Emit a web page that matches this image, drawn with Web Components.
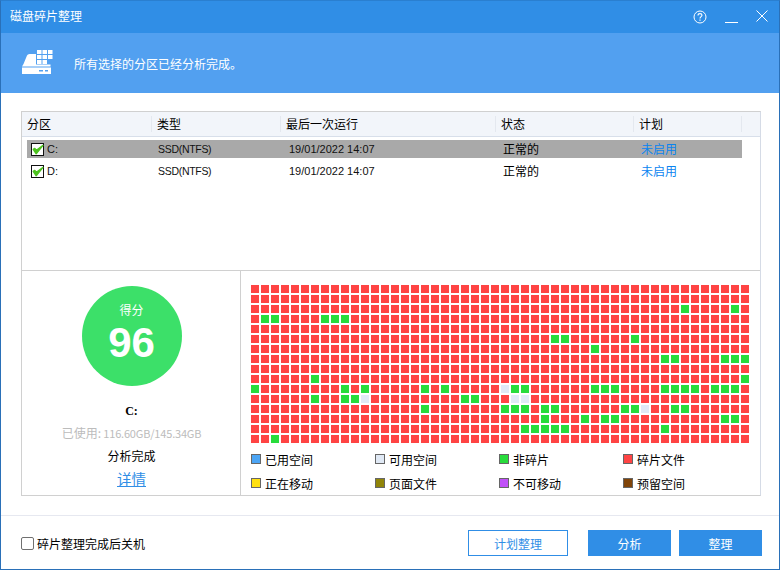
<!DOCTYPE html>
<html lang="zh">
<head>
<meta charset="utf-8">
<title>磁盘碎片整理</title>
<style>
  html, body { margin: 0; padding: 0; background: #fff; }
  body { font: 12px "Noto Sans CJK SC", "Liberation Sans", sans-serif; color: #000; }
</style>
</head>
<body>

<app-window>
  <title-bar slot="top">磁盘碎片整理</title-bar>
  <info-banner slot="top">所有选择的分区已经分析完成。</info-banner>
  <partition-table slot="table">
    <partition-row selected drive="C:" kind="SSD(NTFS)" last="19/01/2022 14:07" state="正常的" plan="未启用"></partition-row>
    <partition-row drive="D:" kind="SSD(NTFS)" last="19/01/2022 14:07" state="正常的" plan="未启用"></partition-row>
  </partition-table>
  <score-panel slot="score" score="96" drive="C:" used="116.60GB/145.34GB"></score-panel>
  <disk-map slot="map"></disk-map>
  <footer-bar slot="footer"></footer-bar>
</app-window>

<script>
const UI_FONT = '"Noto Sans CJK SC", "Liberation Sans", sans-serif';

class AppWindow extends HTMLElement {
  constructor() {
    super();
    this.attachShadow({ mode: 'open' });
    this.shadowRoot.innerHTML = `
      <style>
        :host { display: flex; flex-direction: column; box-sizing: border-box; width: 780px; height: 570px;
                border: 1px solid #2a70b8; border-top-color: #2a7fd0; background: #fff; font: 12px ${UI_FONT}; }
        .panel { flex: none; margin: 18px 18px 0 20px; height: 383px; border: 1px solid #d0d0d0; border-right-color: #d5dbe6;
                 display: grid; grid-template-rows: 158px 225px; }
        .lower { display: grid; grid-template-columns: 219px 1fr; border-top: 1px solid #d0d0d0; }
      </style>
      <slot name="top"></slot>
      <div class="panel">
        <slot name="table"></slot>
        <div class="lower">
          <slot name="score"></slot>
          <slot name="map"></slot>
        </div>
      </div>
      <slot name="footer"></slot>
    `;
  }
}

class TitleBar extends HTMLElement {
  constructor() {
    super();
    this.attachShadow({ mode: 'open' });
    this.shadowRoot.innerHTML = `
      <style>
        :host { display: flex; align-items: center; height: 32px; background: #308ee6; color: #fff; padding-left: 9px; flex: none; }
        .text { flex: 1; position: relative; top: -2px; }
        svg { display: block; fill: none; stroke: #fff; }
        .btns { display: flex; align-items: center; margin-right: 11px; }
        .help { margin-right: 18px; }
        .min { margin-right: 18px; }
        .close { position: relative; top: -1px; }
      </style>
      <span class="text"><slot></slot></span>
      <div class="btns">
        <svg class="help" width="14" height="14" viewBox="0 0 14 14">
          <circle cx="7" cy="7" r="6" stroke-width="1"/>
          <path d="M5 5.500C5 4.200 5.900 3.600 7 3.600S9 4.300 9 5.300C9 6.600 7 6.600 7 8.400" stroke-width="1.100"/>
          <path d="M7 9.600V10.800" stroke-width="1.200"/>
        </svg>
        <svg class="min" width="13" height="14" viewBox="0 0 13 14"><path d="M0 12.500H13" stroke-width="1"/></svg>
        <svg class="close" width="12" height="12" viewBox="0 0 12 12"><path d="M.5 .5L11.500 11.500M11.500 .5L.5 11.500" stroke-width="1"/></svg>
      </div>
    `;
  }
}

class InfoBanner extends HTMLElement {
  constructor() {
    super();
    this.attachShadow({ mode: 'open' });
    this.shadowRoot.innerHTML = `
      <style>
        :host { display: flex; align-items: center; height: 60px; background: #52a0f0; color: #fff; padding-left: 21px; flex: none; }
        svg { display: block; fill: #fff; margin-right: 20px; }
      </style>
      <svg width="32" height="26" viewBox="0 0 32 26">
        <path d="M0 16.500L1.500 14L5 5.500Q5.600 4 7.500 4H14V14.500H28.500V16.500Z"/>
        <path d="M0 17.500H29V24H0ZM17 20V21.500H21V20ZM23 20V21.500H26V20Z" fill-rule="evenodd"/>
        <rect x="15" y="0" width="4.500" height="4"/><rect x="20.500" y="0" width="4.500" height="4"/><rect x="26" y="0" width="4.500" height="4"/>
        <rect x="15" y="5" width="4.500" height="4"/><rect x="20.500" y="5" width="4.500" height="4"/><rect x="26" y="5" width="4.500" height="4"/>
        <rect x="15" y="10" width="4.500" height="4"/><rect x="20.500" y="10" width="4.500" height="4"/>
      </svg>
      <slot></slot>
    `;
  }
}

class PartitionTable extends HTMLElement {
  constructor() {
    super();
    this.attachShadow({ mode: 'open' });
    this.shadowRoot.innerHTML = `
      <style>
        :host { display: block; overflow: hidden; }
        .head { display: grid; grid-template-columns: 130px 129px 215px 138px 108px 1fr; height: 24px;
                background: #f2f5fa; border-bottom: 1px solid #d8dfea; align-items: center; }
        .head span { box-sizing: border-box; height: 16px; line-height: 15px; padding-left: 5px; border-right: 1px solid #e4e8ef; }
        .head span:last-child { border-right: 0; }
        .rows { display: flex; flex-direction: column; gap: 4px; padding: 3px 18px 0 5px; }
      </style>
      <div class="head">
        <span>分区</span><span>类型</span><span>最后一次运行</span><span>状态</span><span>计划</span><span></span>
      </div>
      <div class="rows"><slot></slot></div>
    `;
  }
}

class PartitionRow extends HTMLElement {
  connectedCallback() {
    if (this.shadowRoot) return;
    this.attachShadow({ mode: 'open' });
    const g = n => this.getAttribute(n);
    this.shadowRoot.innerHTML = `
      <style>
        :host { display: grid; grid-template-columns: 131px 131px 214px 138px 1fr; height: 18px; align-items: center;
                font-size: 11px; line-height: 18px; }
        :host([selected]) { background: #a9a9a9; }
        .drive { display: flex; align-items: center; padding-left: 4px; }
        svg { display: block; margin-right: 3px; flex: none; }
        .name { font-family: "Liberation Sans", sans-serif; font-size: 11px; color: #111; }
        .kind { font-family: "Liberation Sans", sans-serif; font-size: 10.500px; letter-spacing: -.3px; color: #111; }
        .last { font-family: "Liberation Sans", sans-serif; font-size: 11px; color: #111; }
        .state { font-size: 12px; }
        .plan { font-size: 12px; color: #0a84f0; }
      </style>
      <div class="drive">
        <svg width="13" height="13" viewBox="0 0 13 13">
          <rect x=".5" y=".5" width="12" height="12" fill="#fff" stroke="#111"/>
          <path d="M2.200 6.300L5.200 10.800L12 2.400L5.400 7.200L3.800 5.300Z" fill="#4cc21e" stroke="#4cc21e" stroke-width="1.300" stroke-linejoin="round"/>
        </svg>
        <span class="name">${g('drive')}</span>
      </div>
      <span class="kind">${g('kind')}</span>
      <span class="last">${g('last')}</span>
      <span class="state">${g('state')}</span>
      <span class="plan">${g('plan')}</span>
    `;
  }
}

class ScorePanel extends HTMLElement {
  connectedCallback() {
    if (this.shadowRoot) return;
    this.attachShadow({ mode: 'open' });
    const g = n => this.getAttribute(n);
    this.shadowRoot.innerHTML = `
      <style>
        :host { display: flex; flex-direction: column; align-items: center; border-right: 1px solid #d0d0d0; padding: 15px 0 0 1px; }
        .circle { width: 100px; height: 100px; border-radius: 50%; background: #3ce069; color: #fff; display: flex;
                  flex-direction: column; align-items: center; flex: none; }
        .label { margin-top: 15px; line-height: 18px; }
        .num { font: bold 42px/48px "Liberation Sans", sans-serif; }
        .drive { font: bold 12px/16px "Liberation Serif", serif; margin-top: 17px; }
        .used { color: #bcbcbc; font-size: 11px; line-height: 16px; margin-top: 6px; letter-spacing: -.18px; }
        .used em { font-style: normal; font-size: 12px; letter-spacing: 0; }
        .status { line-height: 18px; margin-top: 6px; }
        a { color: #308ee6; font-size: 14.500px; line-height: 20px; margin-top: 4px; text-decoration: underline; }
      </style>
      <div class="circle">
        <span class="label">得分</span>
        <span class="num">${g('score')}</span>
      </div>
      <div class="drive">${g('drive')}</div>
      <div class="used"><em>已使用:</em> ${g('used')}</div>
      <div class="status">分析完成</div>
      <a href="#">详情</a>
    `;
  }
}

// greens and free clusters by row: row -> column list
const GREEN = {
  2: [43, 48],
  3: [1, 2, 7, 8, 9],
  5: [30, 31, 38],
  6: [34],
  7: [41, 42, 47, 48, 49],
  9: [6, 49],
  10: [0, 9, 11, 17, 19, 26, 27, 34, 35, 36, 41, 42, 43, 44, 46, 47, 48],
  11: [6, 9, 10, 21, 22],
  12: [17, 25, 26, 27, 29, 30, 37, 38, 42, 43],
  13: [29, 33, 35, 36, 47, 48],
  14: [27, 28, 29, 30, 31, 41],
  15: [2]
};
const FREE = { 10: [25], 11: [11, 26, 27], 12: [39] };

class DiskMap extends HTMLElement {
  constructor() {
    super();
    this.attachShadow({ mode: 'open' });
    let cells = '';
    for (let r = 0; r < 16; r++) {
      for (let c = 0; c < 50; c++) {
        let cls = '';
        if ((GREEN[r] || []).includes(c)) cls = ' class="g"';
        else if ((FREE[r] || []).includes(c)) cls = ' class="f"';
        cells += `<i${cls}></i>`;
      }
    }
    this.shadowRoot.innerHTML = `
      <style>
        :host { display: block; padding: 14px 0 0 10px; }
        .grid { display: grid; grid-template-columns: repeat(50, 8px); grid-auto-rows: 8px; gap: 2px; }
        i { display: block; background: #ff4444; }
        i.g { background: #28dc3c; }
        i.f { background: #e0e9f5; }
        .legend { display: grid; grid-template-columns: repeat(4, 124px); grid-auto-rows: 24px; margin-top: 4px; }
      </style>
      <div class="grid">${cells}</div>
      <div class="legend">
        <legend-item color="#4ca5f5">已用空间</legend-item>
        <legend-item color="#e0e9f5">可用空间</legend-item>
        <legend-item color="#28dc3c">非碎片</legend-item>
        <legend-item color="#ff4444">碎片文件</legend-item>
        <legend-item color="#ffe010">正在移动</legend-item>
        <legend-item color="#908408">页面文件</legend-item>
        <legend-item color="#c050f8">不可移动</legend-item>
        <legend-item color="#804408">预留空间</legend-item>
      </div>
    `;
  }
}

class LegendItem extends HTMLElement {
  constructor() {
    super();
    this.attachShadow({ mode: 'open' });
    this.shadowRoot.innerHTML = `
      <style>
        :host { display: flex; align-items: center; gap: 4px; }
        b { display: block; box-sizing: border-box; width: 10px; height: 10px; border: 1px solid #666; flex: none; background: var(--swatch); }
      </style>
      <b></b><slot></slot>
    `;
  }
  connectedCallback() {
    this.style.setProperty('--swatch', this.getAttribute('color'));
  }
}

class ActionButton extends HTMLElement {
  constructor() {
    super();
    this.attachShadow({ mode: 'open' });
    this.shadowRoot.innerHTML = `
      <style>
        :host { display: flex; align-items: center; justify-content: center; box-sizing: border-box; height: 26px; width: 83px;
                background: #308ee6; color: #fff; flex: none; }
        :host([outline]) { width: 100px; background: #fff; color: #308ee6; border: 1px solid #308ee6; }
      </style>
      <slot></slot>
    `;
  }
}

class FooterBar extends HTMLElement {
  constructor() {
    super();
    this.attachShadow({ mode: 'open' });
    this.shadowRoot.innerHTML = `
      <style>
        :host { display: flex; align-items: center; flex: 1; margin-top: 19px; border-top: 1px solid #e6e8f0; padding: 1px 17px 0 20px; }
        .box { box-sizing: border-box; width: 13px; height: 13px; border: 1px solid #707070; border-radius: 2px; background: #fff; margin-right: 3px; }
        .grow { flex: 1; }
        .gap1 { width: 20px; } .gap2 { width: 8px; }
      </style>
      <span class="box"></span><span>碎片整理完成后关机</span>
      <span class="grow"></span>
      <action-button outline>计划整理</action-button>
      <span class="gap1"></span>
      <action-button>分析</action-button>
      <span class="gap2"></span>
      <action-button>整理</action-button>
    `;
  }
}

customElements.define('app-window', AppWindow);
customElements.define('title-bar', TitleBar);
customElements.define('info-banner', InfoBanner);
customElements.define('partition-table', PartitionTable);
customElements.define('partition-row', PartitionRow);
customElements.define('score-panel', ScorePanel);
customElements.define('legend-item', LegendItem);
customElements.define('disk-map', DiskMap);
customElements.define('action-button', ActionButton);
customElements.define('footer-bar', FooterBar);
</script>
</body>
</html>
